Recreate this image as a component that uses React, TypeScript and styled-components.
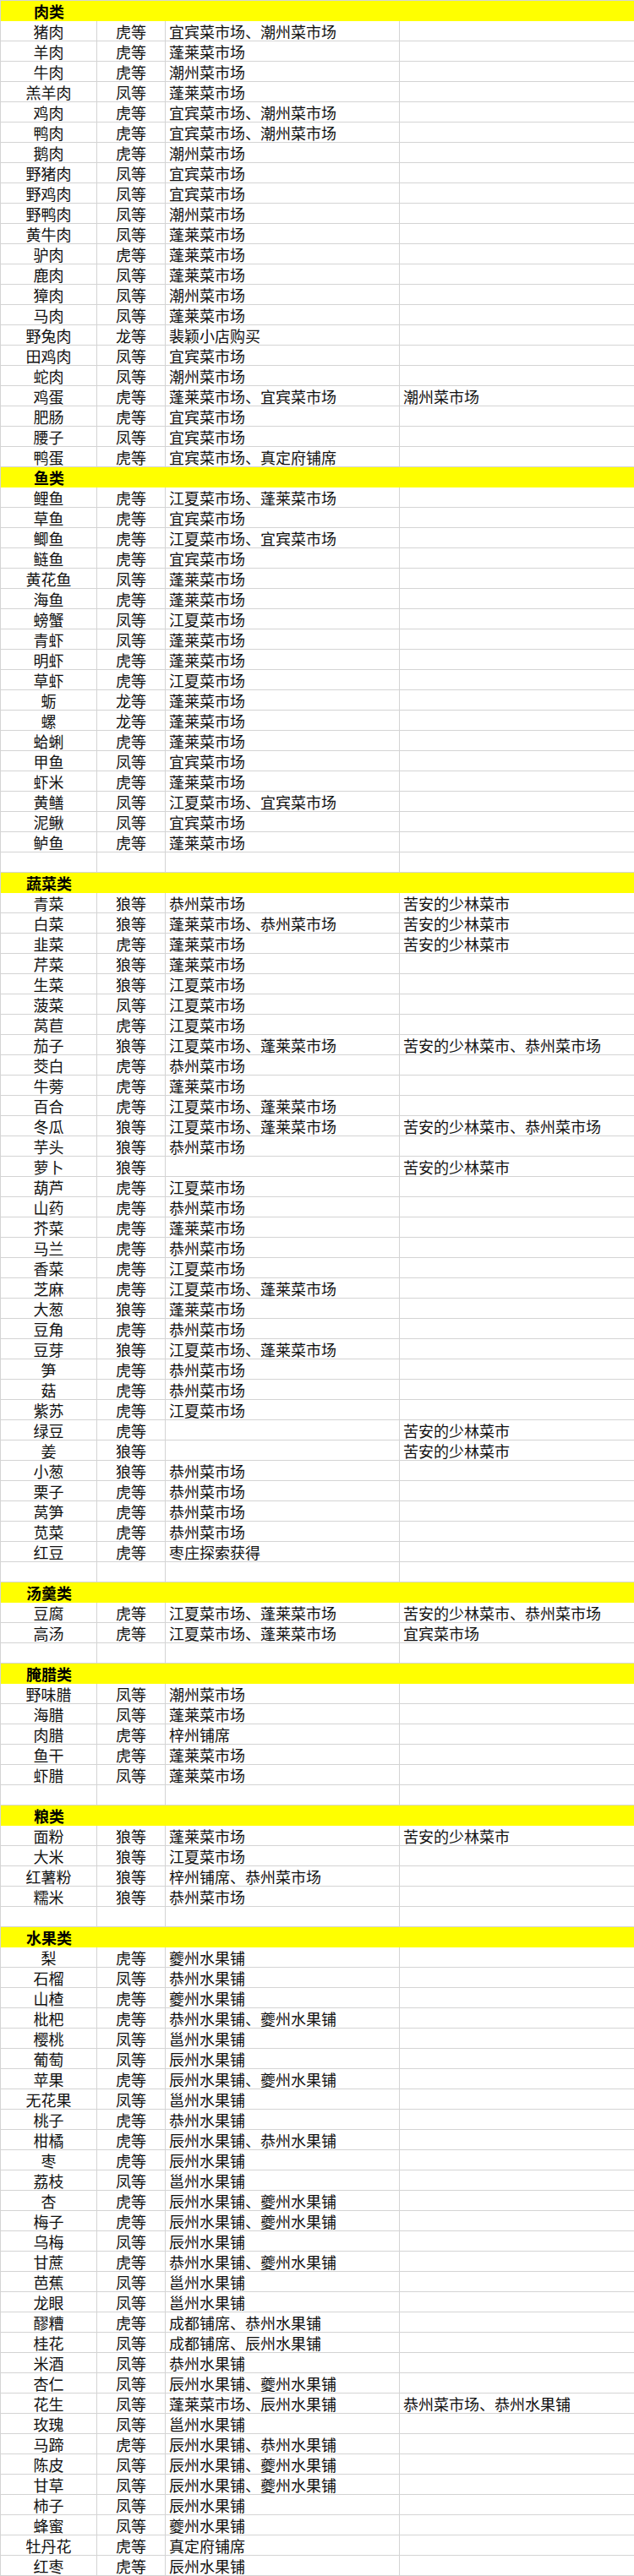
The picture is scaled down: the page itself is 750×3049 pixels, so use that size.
import React from "react";
import styled, { createGlobalStyle } from "styled-components";

const GlobalStyle = createGlobalStyle`
  html, body {
    margin: 0;
    padding: 0;
    background: #ffffff;
  }
  body {
    font-family: "Noto Sans CJK SC", "Noto Sans", sans-serif;
  }
`;

type Item = [string, string, string, string?];

interface Section {
  title: string;
  items: Item[];
  trailingBlank: boolean;
}

const sections: Section[] = [
  {
    title: "肉类",
    trailingBlank: false,
    items: [
      ["猪肉", "虎等", "宜宾菜市场、潮州菜市场"],
      ["羊肉", "虎等", "蓬莱菜市场"],
      ["牛肉", "虎等", "潮州菜市场"],
      ["羔羊肉", "凤等", "蓬莱菜市场"],
      ["鸡肉", "虎等", "宜宾菜市场、潮州菜市场"],
      ["鸭肉", "虎等", "宜宾菜市场、潮州菜市场"],
      ["鹅肉", "虎等", "潮州菜市场"],
      ["野猪肉", "凤等", "宜宾菜市场"],
      ["野鸡肉", "凤等", "宜宾菜市场"],
      ["野鸭肉", "凤等", "潮州菜市场"],
      ["黄牛肉", "凤等", "蓬莱菜市场"],
      ["驴肉", "虎等", "蓬莱菜市场"],
      ["鹿肉", "凤等", "蓬莱菜市场"],
      ["獐肉", "凤等", "潮州菜市场"],
      ["马肉", "凤等", "蓬莱菜市场"],
      ["野兔肉", "龙等", "裴颖小店购买"],
      ["田鸡肉", "凤等", "宜宾菜市场"],
      ["蛇肉", "凤等", "潮州菜市场"],
      ["鸡蛋", "虎等", "蓬莱菜市场、宜宾菜市场", "潮州菜市场"],
      ["肥肠", "虎等", "宜宾菜市场"],
      ["腰子", "凤等", "宜宾菜市场"],
      ["鸭蛋", "虎等", "宜宾菜市场、真定府铺席"],
    ],
  },
  {
    title: "鱼类",
    trailingBlank: true,
    items: [
      ["鲤鱼", "虎等", "江夏菜市场、蓬莱菜市场"],
      ["草鱼", "虎等", "宜宾菜市场"],
      ["鲫鱼", "虎等", "江夏菜市场、宜宾菜市场"],
      ["鲢鱼", "虎等", "宜宾菜市场"],
      ["黄花鱼", "凤等", "蓬莱菜市场"],
      ["海鱼", "虎等", "蓬莱菜市场"],
      ["螃蟹", "凤等", "江夏菜市场"],
      ["青虾", "凤等", "蓬莱菜市场"],
      ["明虾", "虎等", "蓬莱菜市场"],
      ["草虾", "虎等", "江夏菜市场"],
      ["蛎", "龙等", "蓬莱菜市场"],
      ["螺", "龙等", "蓬莱菜市场"],
      ["蛤蜊", "虎等", "蓬莱菜市场"],
      ["甲鱼", "凤等", "宜宾菜市场"],
      ["虾米", "虎等", "蓬莱菜市场"],
      ["黄鳝", "凤等", "江夏菜市场、宜宾菜市场"],
      ["泥鳅", "凤等", "宜宾菜市场"],
      ["鲈鱼", "虎等", "蓬莱菜市场"],
    ],
  },
  {
    title: "蔬菜类",
    trailingBlank: true,
    items: [
      ["青菜", "狼等", "恭州菜市场", "苦安的少林菜市"],
      ["白菜", "狼等", "蓬莱菜市场、恭州菜市场", "苦安的少林菜市"],
      ["韭菜", "虎等", "蓬莱菜市场", "苦安的少林菜市"],
      ["芹菜", "狼等", "蓬莱菜市场"],
      ["生菜", "狼等", "江夏菜市场"],
      ["菠菜", "凤等", "江夏菜市场"],
      ["莴苣", "虎等", "江夏菜市场"],
      ["茄子", "狼等", "江夏菜市场、蓬莱菜市场", "苦安的少林菜市、恭州菜市场"],
      ["茭白", "虎等", "恭州菜市场"],
      ["牛蒡", "虎等", "蓬莱菜市场"],
      ["百合", "虎等", "江夏菜市场、蓬莱菜市场"],
      ["冬瓜", "狼等", "江夏菜市场、蓬莱菜市场", "苦安的少林菜市、恭州菜市场"],
      ["芋头", "狼等", "恭州菜市场"],
      ["萝卜", "狼等", "", "苦安的少林菜市"],
      ["葫芦", "虎等", "江夏菜市场"],
      ["山药", "虎等", "恭州菜市场"],
      ["芥菜", "虎等", "蓬莱菜市场"],
      ["马兰", "虎等", "恭州菜市场"],
      ["香菜", "虎等", "江夏菜市场"],
      ["芝麻", "虎等", "江夏菜市场、蓬莱菜市场"],
      ["大葱", "狼等", "蓬莱菜市场"],
      ["豆角", "虎等", "恭州菜市场"],
      ["豆芽", "狼等", "江夏菜市场、蓬莱菜市场"],
      ["笋", "虎等", "恭州菜市场"],
      ["菇", "虎等", "恭州菜市场"],
      ["紫苏", "虎等", "江夏菜市场"],
      ["绿豆", "虎等", "", "苦安的少林菜市"],
      ["姜", "狼等", "", "苦安的少林菜市"],
      ["小葱", "狼等", "恭州菜市场"],
      ["栗子", "虎等", "恭州菜市场"],
      ["莴笋", "虎等", "恭州菜市场"],
      ["苋菜", "虎等", "恭州菜市场"],
      ["红豆", "虎等", "枣庄探索获得"],
    ],
  },
  {
    title: "汤羹类",
    trailingBlank: true,
    items: [
      ["豆腐", "虎等", "江夏菜市场、蓬莱菜市场", "苦安的少林菜市、恭州菜市场"],
      ["高汤", "虎等", "江夏菜市场、蓬莱菜市场", "宜宾菜市场"],
    ],
  },
  {
    title: "腌腊类",
    trailingBlank: true,
    items: [
      ["野味腊", "凤等", "潮州菜市场"],
      ["海腊", "凤等", "蓬莱菜市场"],
      ["肉腊", "虎等", "梓州铺席"],
      ["鱼干", "虎等", "蓬莱菜市场"],
      ["虾腊", "凤等", "蓬莱菜市场"],
    ],
  },
  {
    title: "粮类",
    trailingBlank: true,
    items: [
      ["面粉", "狼等", "蓬莱菜市场", "苦安的少林菜市"],
      ["大米", "狼等", "江夏菜市场"],
      ["红薯粉", "狼等", "梓州铺席、恭州菜市场"],
      ["糯米", "狼等", "恭州菜市场"],
    ],
  },
  {
    title: "水果类",
    trailingBlank: false,
    items: [
      ["梨", "虎等", "夔州水果铺"],
      ["石榴", "凤等", "恭州水果铺"],
      ["山楂", "虎等", "夔州水果铺"],
      ["枇杷", "虎等", "恭州水果铺、夔州水果铺"],
      ["樱桃", "凤等", "邕州水果铺"],
      ["葡萄", "凤等", "辰州水果铺"],
      ["苹果", "虎等", "辰州水果铺、夔州水果铺"],
      ["无花果", "凤等", "邕州水果铺"],
      ["桃子", "虎等", "恭州水果铺"],
      ["柑橘", "虎等", "辰州水果铺、恭州水果铺"],
      ["枣", "虎等", "辰州水果铺"],
      ["荔枝", "凤等", "邕州水果铺"],
      ["杏", "虎等", "辰州水果铺、夔州水果铺"],
      ["梅子", "虎等", "辰州水果铺、夔州水果铺"],
      ["乌梅", "凤等", "辰州水果铺"],
      ["甘蔗", "虎等", "恭州水果铺、夔州水果铺"],
      ["芭蕉", "凤等", "邕州水果铺"],
      ["龙眼", "凤等", "邕州水果铺"],
      ["醪糟", "虎等", "成都铺席、恭州水果铺"],
      ["桂花", "凤等", "成都铺席、辰州水果铺"],
      ["米酒", "凤等", "恭州水果铺"],
      ["杏仁", "凤等", "辰州水果铺、夔州水果铺"],
      ["花生", "凤等", "蓬莱菜市场、辰州水果铺", "恭州菜市场、恭州水果铺"],
      ["玫瑰", "凤等", "邕州水果铺"],
      ["马蹄", "虎等", "辰州水果铺、恭州水果铺"],
      ["陈皮", "凤等", "辰州水果铺、夔州水果铺"],
      ["甘草", "凤等", "辰州水果铺、夔州水果铺"],
      ["柿子", "凤等", "辰州水果铺"],
      ["蜂蜜", "凤等", "夔州水果铺"],
      ["牡丹花", "虎等", "真定府铺席"],
      ["红枣", "虎等", "辰州水果铺"],
    ],
  },
];

export default function App() {
  return (
    <>
      <GlobalStyle />
      <Sheet>
        {sections.map((section) => (
          <React.Fragment key={section.title}>
            <HeaderRow>
              <HeaderLabel>{section.title}</HeaderLabel>
            </HeaderRow>
            {section.items.map(([name, grade, market, extra]) => (
              <Row key={name}>
                <Cell $align="center">{name}</Cell>
                <Cell $align="center">{grade}</Cell>
                <Cell $align="left">{market}</Cell>
                <Cell $align="left" $last>{extra ?? ""}</Cell>
              </Row>
            ))}
            {section.trailingBlank && (
              <Row>
                <Cell $align="center" />
                <Cell $align="center" />
                <Cell $align="left" />
                <Cell $align="left" $last />
              </Row>
            )}
          </React.Fragment>
        ))}
      </Sheet>
    </>
  );
}

const Sheet = styled.div`
  width: 750px;
  box-sizing: border-box;
  border-top: 1px solid #d4d4d4;
  border-left: 1px solid #d4d4d4;
  background: #ffffff;
  font-family: "Noto Sans CJK SC", "Noto Sans", sans-serif;
  color: #111111;
`;

const Row = styled.div`
  display: grid;
  grid-template-columns: 114px 81px 277px 277px;
  height: 24px;
  box-sizing: border-box;
  border-bottom: 1px solid #d4d4d4;
`;

const HeaderRow = styled.div`
  display: flex;
  height: 24px;
  box-sizing: border-box;
  background: #ffff00;
  border-bottom: 1px solid #ffff00;
`;

const HeaderLabel = styled.div`
  width: 114px;
  height: 23px;
  box-sizing: border-box;
  padding-top: 2px;
  text-align: center;
  font-size: 18px;
  line-height: 21px;
  font-weight: 700;
  color: #000000;
`;

const Cell = styled.div<{ $align: "left" | "center"; $last?: boolean }>`
  box-sizing: border-box;
  height: 23px;
  padding: 2px 0 0 ${(p) => (p.$align === "left" ? "4px" : "0")};
  border-right: ${(p) => (p.$last ? "none" : "1px solid #d4d4d4")};
  text-align: ${(p) => p.$align};
  font-size: 18px;
  line-height: 21px;
  white-space: nowrap;
`;
